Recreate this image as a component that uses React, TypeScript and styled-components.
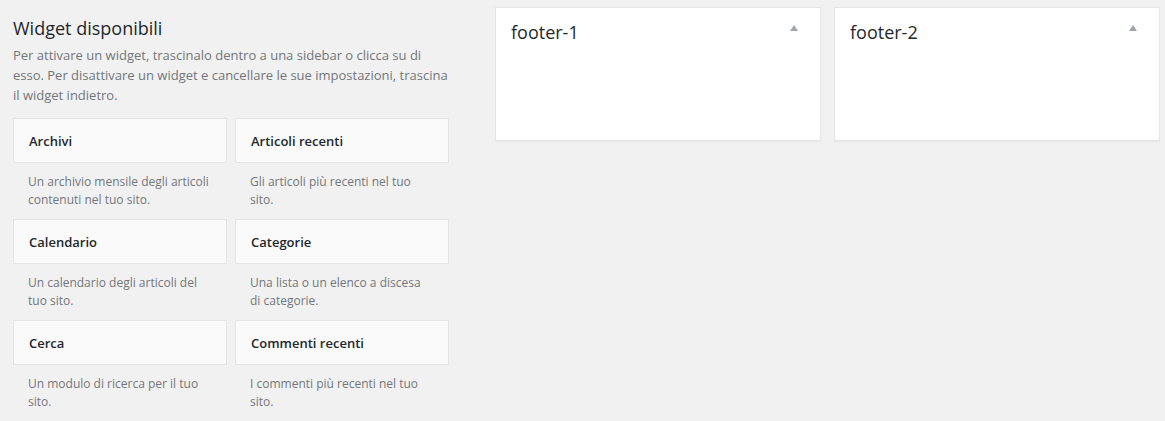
import React from "react";
import styled, { createGlobalStyle } from "styled-components";

const Global = createGlobalStyle`
  html, body { margin: 0; padding: 0; background: #f1f1f1; }
  body { font-family: "Open Sans", "Liberation Sans", sans-serif; color: #444; }
`;

const Page = styled.div`
  display: grid;
  grid-template-columns: 436px 665px;
  column-gap: 46px;
  padding: 7px 5px 0 13px;
  align-items: start;
`;

const Available = styled.section`
  display: flex;
  flex-direction: column;
`;

const Heading = styled.h2`
  margin: 8px 0 0;
  font-size: 18px;
  line-height: 26px;
  font-weight: 400;
  color: #23282d;
`;

const Intro = styled.p`
  margin: 4px 0 13px;
  font-size: 13px;
  line-height: 20px;
  color: #72777c;
`;

const WidgetGrid = styled.div`
  display: grid;
  grid-template-columns: 214px 214px;
  column-gap: 8px;
`;

const Widget = styled.div`
  display: flex;
  flex-direction: column;
`;

const WidgetTop = styled.div`
  height: 43px;
  background: #fafafa;
  border: 1px solid #e5e5e5;
  display: flex;
  align-items: center;
  padding: 0 15px;
  font-size: 13px;
  font-weight: 600;
  color: #23282d;
`;

const WidgetDesc = styled.div`
  padding: 10px 15px 10px;
  font-size: 12px;
  line-height: 18px;
  color: #72777c;
  min-height: 36px;
`;

const Sidebars = styled.div`
  display: grid;
  grid-template-columns: 1fr 1fr;
  column-gap: 13px;
`;

const SidebarBox = styled.div`
  background: #fff;
  border: 1px solid #e5e5e5;
  height: 132px;
  box-shadow: 0 1px 1px rgba(0, 0, 0, 0.04);
`;

const SidebarHeader = styled.div`
  display: flex;
  justify-content: space-between;
  align-items: flex-start;
  padding: 11px 22px 0 15px;
`;

const SidebarTitle = styled.h2`
  margin: 0;
  font-size: 18px;
  line-height: 26px;
  font-weight: 400;
  color: #23282d;
`;

const Toggle = styled.span`
  width: 0;
  height: 0;
  margin-top: 6px;
  border-left: 4px solid transparent;
  border-right: 4px solid transparent;
  border-bottom: 6px solid #a0a5aa;
`;

const widgets = [
  ["Archivi", "Un archivio mensile degli articoli contenuti nel tuo sito."],
  ["Articoli recenti", "Gli articoli più recenti nel tuo sito."],
  ["Calendario", "Un calendario degli articoli del tuo sito."],
  ["Categorie", "Una lista o un elenco a discesa di categorie."],
  ["Cerca", "Un modulo di ricerca per il tuo sito."],
  ["Commenti recenti", "I commenti più recenti nel tuo sito."],
];

export default function App() {
  return (
    <>
      <Global />
      <Page>
        <Available>
          <Heading>Widget disponibili</Heading>
          <Intro>
            Per attivare un widget, trascinalo dentro a una sidebar o clicca su di esso. Per
            disattivare un widget e cancellare le sue impostazioni, trascina il widget indietro.
          </Intro>
          <WidgetGrid>
            {widgets.map(([t, d]) => (
              <Widget key={t}>
                <WidgetTop>{t}</WidgetTop>
                <WidgetDesc>{d}</WidgetDesc>
              </Widget>
            ))}
          </WidgetGrid>
        </Available>
        <Sidebars>
          {["footer-1", "footer-2"].map((n) => (
            <SidebarBox key={n}>
              <SidebarHeader>
                <SidebarTitle>{n}</SidebarTitle>
                <Toggle />
              </SidebarHeader>
            </SidebarBox>
          ))}
        </Sidebars>
      </Page>
    </>
  );
}
